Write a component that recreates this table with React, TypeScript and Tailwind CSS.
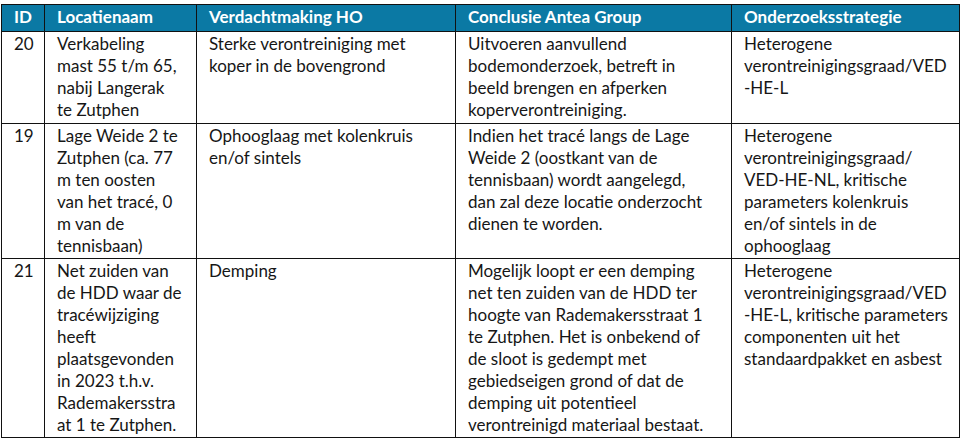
import React from "react";

type Row = { id: string; cols: string[][] };

const rows: Row[] = [
  {
    id: "20",
    cols: [
      ["Verkabeling", "mast 55 t/m 65,", "nabij Langerak", "te Zutphen"],
      ["Sterke verontreiniging met", "koper in de bovengrond"],
      ["Uitvoeren aanvullend", "bodemonderzoek, betreft in", "beeld brengen en afperken", "koperverontreiniging."],
      ["Heterogene", "verontreinigingsgraad/VED", "-HE-L"],
    ],
  },
  {
    id: "19",
    cols: [
      ["Lage Weide 2 te", "Zutphen (ca. 77", "m ten oosten", "van het tracé, 0", "m van de", "tennisbaan)"],
      ["Ophooglaag met kolenkruis", "en/of sintels"],
      ["Indien het tracé langs de Lage", "Weide 2 (oostkant van de", "tennisbaan) wordt aangelegd,", "dan zal deze locatie onderzocht", "dienen te worden."],
      ["Heterogene", "verontreinigingsgraad/", "VED-HE-NL, kritische", "parameters kolenkruis", "en/of sintels in de", "ophooglaag"],
    ],
  },
  {
    id: "21",
    cols: [
      ["Net zuiden van", "de HDD waar de", "tracéwijziging", "heeft", "plaatsgevonden", "in 2023 t.h.v.", "Rademakersstra", "at 1 te Zutphen."],
      ["Demping"],
      ["Mogelijk loopt er een demping", "net ten zuiden van de HDD ter", "hoogte van Rademakersstraat 1", "te Zutphen. Het is onbekend of", "de sloot is gedempt met", "gebiedseigen grond of dat de", "demping uit potentieel", "verontreinigd materiaal bestaat."],
      ["Heterogene", "verontreinigingsgraad/VED", "-HE-L, kritische parameters", "componenten uit het", "standaardpakket en asbest"],
    ],
  },
];

const headers = ["ID", "Locatienaam", "Verdachtmaking HO", "Conclusie Antea Group", "Onderzoeksstrategie"];

function Cell({ lines }: { lines: string[] }) {
  return (
    <div className="bg-white pl-3 pt-[1px] text-[#161616]">
      {lines.map((l, i) => (
        <div key={i} className="whitespace-nowrap">
          {l}
        </div>
      ))}
    </div>
  );
}

export default function App() {
  return (
    <div className="w-[966px] h-[448px] bg-white pl-[1px] pt-[4px]" style={{ fontFamily: "Lato, 'Open Sans', sans-serif" }}>
      <div className="grid w-[959px] grid-cols-[42px_151px_258px_275px_227px] grid-rows-[26px_91px_134px_178px] gap-[1px] bg-[#111111] p-[1px] text-[17px] leading-[22px]">
        {headers.map((h) => (
          <div key={h} className="bg-[#0b79a4] pl-3 pt-[1px] font-bold text-white whitespace-nowrap">
            {h}
          </div>
        ))}
        {rows.map((r) => (
          <React.Fragment key={r.id}>
            <Cell lines={[r.id]} />
            {r.cols.map((c, i) => (
              <Cell key={i} lines={c} />
            ))}
          </React.Fragment>
        ))}
      </div>
    </div>
  );
}
